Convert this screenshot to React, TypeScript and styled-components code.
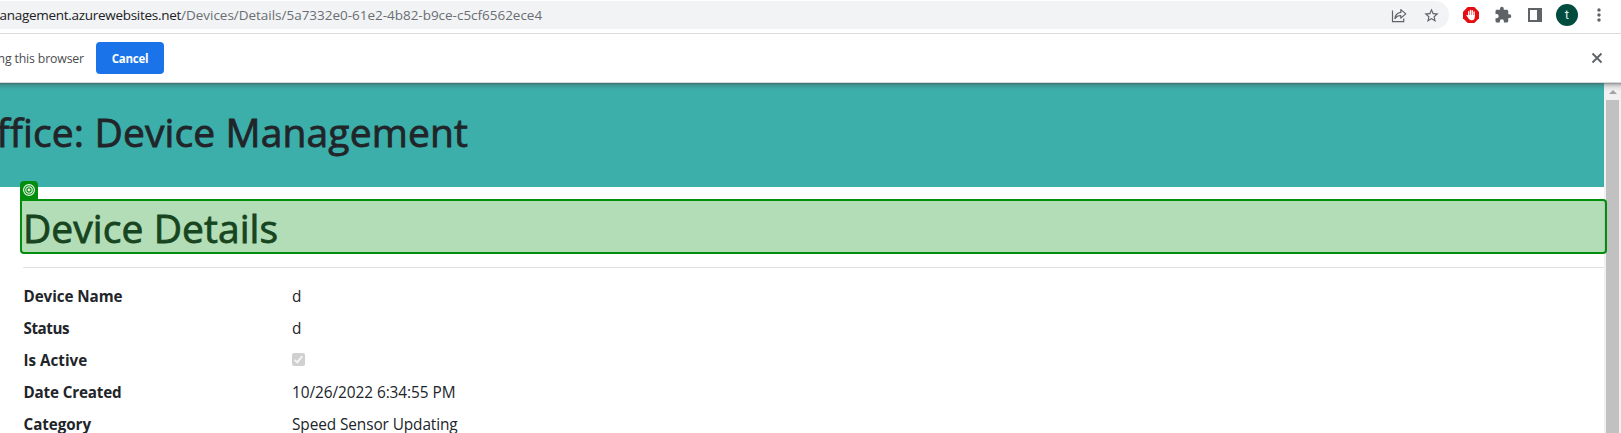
import React from "react";
import styled, { createGlobalStyle } from "styled-components";
import { MdExtension, MdMoreVert, MdStarBorder } from "react-icons/md";

const GlobalStyle = createGlobalStyle`
  *, *::before, *::after { box-sizing: border-box; }
  body {
    margin: 0;
    overflow: hidden;
    background: #fff;
    color: #212529;
    font-family: "Open Sans", "Noto Sans", sans-serif;
  }
`;

const Window = styled.div`
  display: flex;
  flex-direction: column;
  height: 433px;
  overflow: hidden;
`;

const Toolbar = styled.div`
  display: flex;
  align-items: center;
  flex: none;
  height: 34px;
  padding: 0 6px 4px 0;
  border-bottom: 1px solid #dadbdd;
  color: #5f6368;
`;

const AddressBar = styled.div`
  display: flex;
  align-items: center;
  flex: 1;
  height: 28px;
  margin: 1px 6px 0 0;
  padding-right: 2px;
  border-radius: 0 14px 14px 0;
  background: #f1f3f4;
  font-size: 13.5px;
  white-space: nowrap;
`;

const Host = styled.span`
  display: flex;
  justify-content: flex-end;
  width: 181px;
  color: #202124;
  letter-spacing: -0.29px;
`;

const Path = styled.span`
  flex: 1;
  color: #6a6e73;
  letter-spacing: -0.02px;
`;

const IconCell = styled.span`
  display: flex;
  align-items: center;
  justify-content: center;
  width: 32px;
  height: 28px;
`;

const Avatar = styled.span`
  display: flex;
  align-items: center;
  justify-content: center;
  width: 22px;
  height: 22px;
  border-radius: 50%;
  background: #004d40;
  color: #dfeae8;
  font: 13px/22px Roboto, sans-serif;
`;

const InfoBar = styled.div`
  display: flex;
  align-items: center;
  flex: none;
  height: 49px;
  padding-right: 18px;
  border-bottom: 1px solid #d5d7d9;
  color: #5f6368;
`;

const InfoText = styled.span`
  display: flex;
  justify-content: flex-end;
  width: 84px;
  margin-right: 12px;
  color: #4a4c50;
  font-size: 12.3px;
  letter-spacing: -0.15px;
  white-space: nowrap;
`;

const CancelButton = styled.button`
  width: 68px;
  height: 32px;
  margin-right: auto;
  padding: 0;
  border: 0;
  border-radius: 4px;
  background: #1a73e8;
  color: #fff;
  font: 700 11.5px "Open Sans", sans-serif;
  letter-spacing: -0.25px;
`;

const Viewport = styled.div`
  display: flex;
  flex: 1;
  min-height: 0;
  position: relative;

  &::before {
    content: "";
    position: absolute;
    z-index: 2;
    inset: 0 0 auto;
    height: 8px;
    background: linear-gradient(rgba(60, 64, 67, 0.55), rgba(60, 64, 67, 0.25) 25%, rgba(60, 64, 67, 0.08) 60%, transparent);
  }
`;

const Page = styled.div`
  flex: 1;
  min-width: 0;
`;

const Banner = styled.header`
  height: 104px;
  padding-top: 25px;
  background: #3cafaa;
`;

const Heading = styled.h1`
  margin: 0;
  font-size: 39px;
  font-weight: 500;
  line-height: 48px;
  letter-spacing: 0.06px;
  white-space: nowrap;
  -webkit-text-stroke: 0.8px currentColor;
`;

const BannerTitle = styled(Heading)`
  display: flex;
  justify-content: flex-end;
  width: 468px;
  letter-spacing: 0.12px;
`;

const Content = styled.main`
  padding: 17px 0 0 23px;
`;

const Selected = styled.div`
  position: relative;
`;

const Highlight = styled.div`
  position: absolute;
  inset: -5px -3px -2px -3px;
  border: 2px solid #038d0d;
  border-radius: 0 4px 4px 4px;
  background: rgba(3, 141, 13, 0.3);
`;

const Tag = styled.span`
  position: absolute;
  left: -2px;
  bottom: calc(100% + 2px);
  display: flex;
  align-items: center;
  justify-content: center;
  width: 18px;
  height: 18px;
  border-radius: 4px 4px 0 0;
  background: #038d0d;
`;

const Rule = styled.hr`
  height: 1px;
  margin: 15px 0 16px;
  border: 0;
  background: #e0e1e2;
`;

const Details = styled.dl`
  display: grid;
  grid-template-columns: 269px 1fr;
  grid-auto-rows: 24px;
  row-gap: 8px;
  margin: 0;
  line-height: 24px;
`;

const Term = styled.dt<{ $spacing?: number }>`
  padding-left: 0.5px;
  font-size: 15.2px;
  font-weight: 700;
  letter-spacing: ${(p) => p.$spacing ?? 0}px;
`;

const Value = styled.dd<{ $spacing?: number }>`
  margin: 0;
  padding-top: 1px;
  font-size: 15.4px;
  letter-spacing: ${(p) => p.$spacing ?? 0}px;
`;

const CheckBox = styled.span`
  display: block;
  width: 13px;
  height: 13px;
  margin-top: 4px;
  border-radius: 2px;
  background: #d0d0d0;

  svg { display: block; }
`;

const Scrollbar = styled.div`
  display: flex;
  flex-direction: column;
  align-items: center;
  width: 17px;
  background: #f1f1f1;
`;

const ScrollUp = styled.span`
  display: flex;
  align-items: center;
  justify-content: center;
  height: 17px;
`;

const Thumb = styled.span`
  flex: 1;
  width: 13px;
  background: #c1c1c1;
`;

const ShareIcon = () => (
  <svg width="16" height="16" viewBox="0 0 16 16" fill="none" stroke="#5f6368" strokeWidth="1.2">
    <path d="M1.5 3.5v11.2h11.2v-3.2" />
    <path d="M3.9 11.6C4.3 8 6.2 5.8 9.8 5.4V2.6l5 4.3-5 4.2V8.5C7.1 8.5 5.3 9.5 3.9 11.6z" strokeLinejoin="round" />
  </svg>
);

const BlockerIcon = () => (
  <svg width="16" height="16" viewBox="0 0 16 16">
    <path d="M4.7 0h6.6L16 4.7v6.6L11.3 16H4.7L0 11.3V4.7z" fill="#e40d12" />
    <g stroke="#fff" strokeWidth="1.3" strokeLinecap="round">
      <path d="M5.7 4.6V8.5M7.5 3.3V8.5M9.3 3.6V8.5M11.1 5V8.5M4 8.4l2 2.4" />
    </g>
    <path d="M5.1 8h6.7v2c0 1.9-1.1 3.2-2.5 3.2H7.8C6.3 13.2 5.3 11.2 5.1 9.8z" fill="#fff" />
  </svg>
);

const SidePanelIcon = () => (
  <svg width="14" height="14" viewBox="0 0 14 14">
    <path d="M0 0h14v14H0zM2 2v10h7V2z" fill="#5f6368" fillRule="evenodd" />
  </svg>
);

const CloseIcon = () => (
  <svg width="12" height="12" viewBox="0 0 12 12" fill="none" stroke="currentColor" strokeWidth="1.9">
    <path d="M1.5 1.5l9 9M10.5 1.5l-9 9" />
  </svg>
);

const TargetIcon = () => (
  <svg width="12" height="12" viewBox="0 0 12 12" fill="none" stroke="#eefaef" strokeWidth="1.1">
    <circle cx="6" cy="6" r="5.4" />
    <circle cx="6" cy="6" r="3.2" />
    <circle cx="6" cy="6" r="0.9" />
  </svg>
);

const rows = [
  { label: "Device Name", value: "d", ls: -0.06, vs: 0 },
  { label: "Status", value: "d", ls: -0.45, vs: 0 },
  { label: "Is Active", value: true, ls: 0, vs: 0 },
  { label: "Date Created", value: "10/26/2022 6:34:55 PM", ls: -0.15, vs: -0.07 },
  { label: "Category", value: "Speed Sensor Updating", ls: -0.05, vs: -0.1 },
];

export default function App() {
  return (
    <Window>
      <GlobalStyle />
      <Toolbar>
        <AddressBar>
          <Host>anagement.azurewebsites.net</Host>
          <Path>/Devices/Details/5a7332e0-61e2-4b82-b9ce-c5cf6562ece4</Path>
          <IconCell><ShareIcon /></IconCell>
          <IconCell><MdStarBorder size={17} /></IconCell>
        </AddressBar>
        <IconCell><BlockerIcon /></IconCell>
        <IconCell><MdExtension size={18} /></IconCell>
        <IconCell><SidePanelIcon /></IconCell>
        <IconCell><Avatar>t</Avatar></IconCell>
        <IconCell><MdMoreVert size={20} /></IconCell>
      </Toolbar>
      <InfoBar>
        <InfoText>ng this browser</InfoText>
        <CancelButton>Cancel</CancelButton>
        <CloseIcon />
      </InfoBar>
      <Viewport>
        <Page>
          <Banner>
            <BannerTitle>ffice: Device Management</BannerTitle>
          </Banner>
          <Content>
            <Selected>
              <Heading>Device Details</Heading>
              <Highlight>
                <Tag><TargetIcon /></Tag>
              </Highlight>
            </Selected>
            <Rule />
            <Details>
              {rows.map((row) => (
                <React.Fragment key={row.label}>
                  <Term $spacing={row.ls}>{row.label}</Term>
                  <Value $spacing={row.vs}>
                    {row.value === true ? (
                      <CheckBox>
                        <svg width="13" height="13" viewBox="0 0 13 13" fill="none" stroke="#f6f6f6" strokeWidth="1.9">
                          <path d="M2.7 6.8l2.6 2.6 5-6.2" />
                        </svg>
                      </CheckBox>
                    ) : (
                      row.value
                    )}
                  </Value>
                </React.Fragment>
              ))}
            </Details>
          </Content>
        </Page>
        <Scrollbar>
          <ScrollUp>
            <svg width="8" height="4" viewBox="0 0 8 4"><path d="M0 4l4-4 4 4z" fill="#a3a3a3" /></svg>
          </ScrollUp>
          <Thumb />
        </Scrollbar>
      </Viewport>
    </Window>
  );
}
